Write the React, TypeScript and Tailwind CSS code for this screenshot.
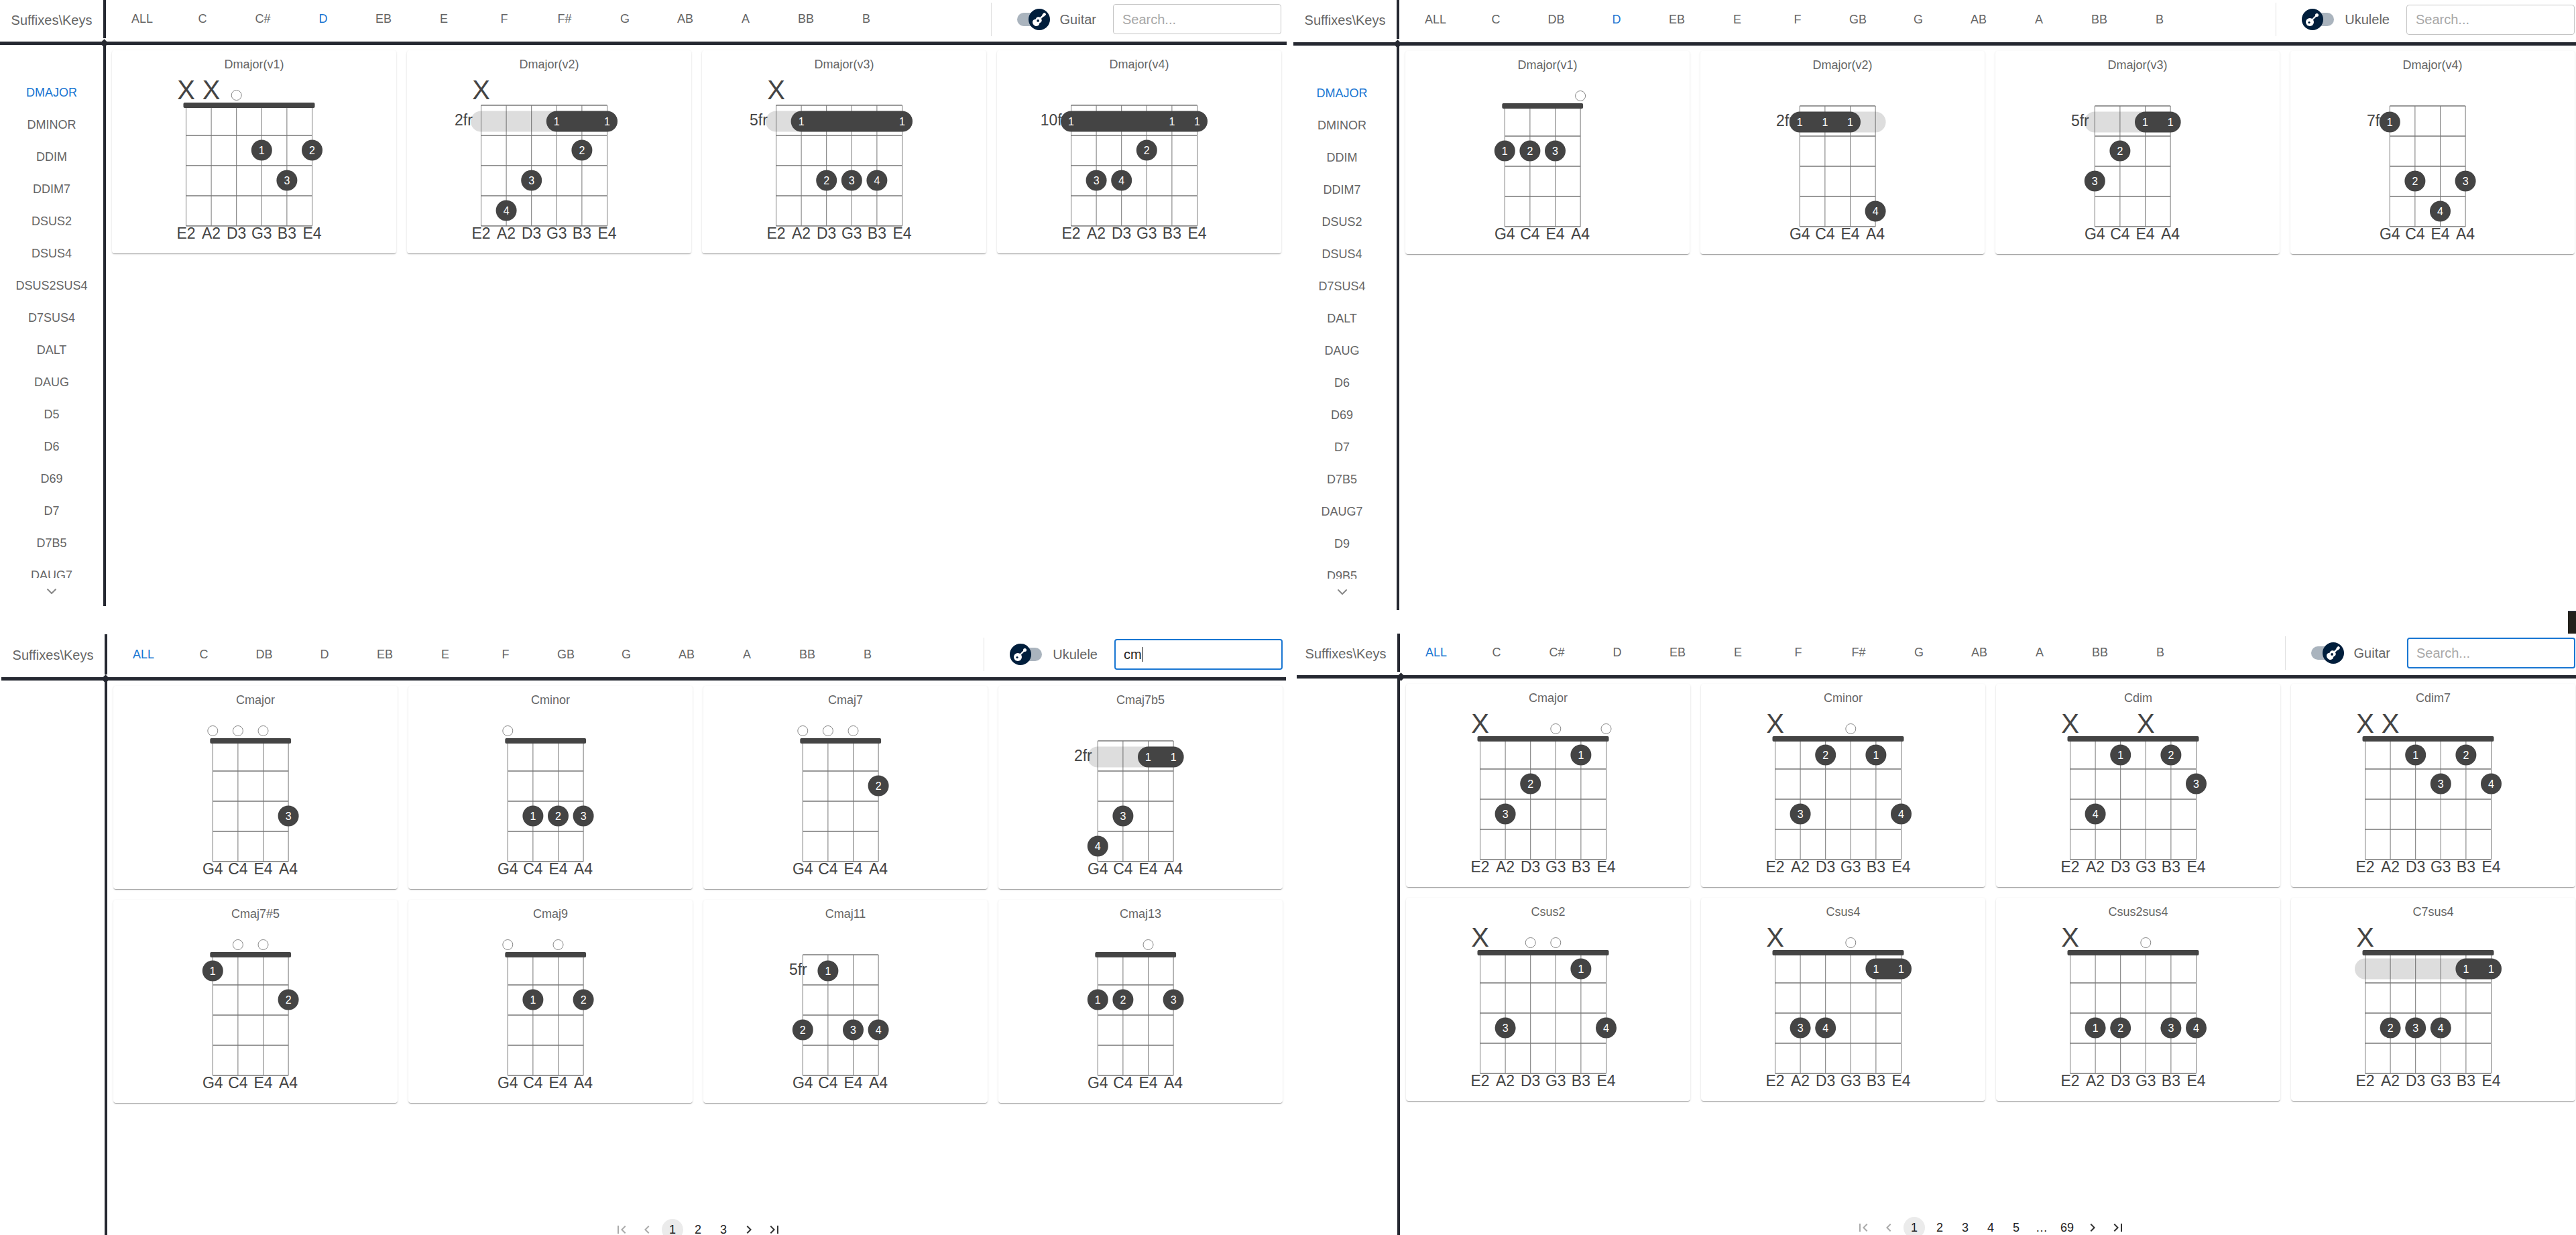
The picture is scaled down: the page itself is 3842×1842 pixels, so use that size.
import { ChevronDown } from "lucide-react";
import { FaGuitar } from "react-icons/fa";

type Dot = [number, number, number];

interface Barre {
    from: number;
    to: number;
    light?: number;
    labels: number[];
}

interface Chord {
    name: string;
    nut?: boolean;
    fr?: string;
    frShift?: number;
    muted?: number[];
    open?: number[];
    dots?: Dot[];
    barre?: Barre;
}

const GUITAR = ["E2", "A2", "D3", "G3", "B3", "E4"];
const UKULELE = ["G4", "C4", "E4", "A4"];
const SHARPS = ["ALL", "C", "C#", "D", "EB", "E", "F", "F#", "G", "AB", "A", "BB", "B"];
const FLATS = ["ALL", "C", "DB", "D", "EB", "E", "F", "GB", "G", "AB", "A", "BB", "B"];

const guitarD: Chord[] = [
    { name: "Dmajor(v1)", nut: true, muted: [0, 1], open: [2], dots: [[3, 2, 1], [5, 2, 2], [4, 3, 3]] },
    { name: "Dmajor(v2)", fr: "2fr", muted: [0], barre: { from: 3, to: 5, light: 0, labels: [3, 5] }, dots: [[4, 2, 2], [2, 3, 3], [1, 4, 4]] },
    { name: "Dmajor(v3)", fr: "5fr", muted: [0], barre: { from: 1, to: 5, light: 0, labels: [1, 5] }, dots: [[2, 3, 2], [3, 3, 3], [4, 3, 4]] },
    { name: "Dmajor(v4)", fr: "10fr", barre: { from: 0, to: 5, labels: [0, 4, 5] }, dots: [[3, 2, 2], [1, 3, 3], [2, 3, 4]] },
];

const ukuleleD: Chord[] = [
    { name: "Dmajor(v1)", nut: true, open: [3], dots: [[0, 2, 1], [1, 2, 2], [2, 2, 3]] },
    { name: "Dmajor(v2)", fr: "2fr", barre: { from: 0, to: 2, light: 3, labels: [0, 1, 2] }, dots: [[3, 4, 4]] },
    { name: "Dmajor(v3)", fr: "5fr", barre: { from: 2, to: 3, light: 0, labels: [2, 3] }, dots: [[1, 2, 2], [0, 3, 3]] },
    { name: "Dmajor(v4)", fr: "7fr", frShift: 1, dots: [[0, 1, 1], [1, 3, 2], [3, 3, 3], [2, 4, 4]] },
];

const ukuleleSearch: Chord[] = [
    { name: "Cmajor", nut: true, open: [0, 1, 2], dots: [[3, 3, 3]] },
    { name: "Cminor", nut: true, open: [0], dots: [[1, 3, 1], [2, 3, 2], [3, 3, 3]] },
    { name: "Cmaj7", nut: true, open: [0, 1, 2], dots: [[3, 2, 2]] },
    { name: "Cmaj7b5", fr: "2fr", barre: { from: 2, to: 3, light: 0, labels: [2, 3] }, dots: [[1, 3, 3], [0, 4, 4]] },
    { name: "Cmaj7#5", nut: true, open: [1, 2], dots: [[0, 1, 1], [3, 2, 2]] },
    { name: "Cmaj9", nut: true, open: [0, 2], dots: [[1, 2, 1], [3, 2, 2]] },
    { name: "Cmaj11", fr: "5fr", frShift: 15, dots: [[1, 1, 1], [0, 3, 2], [2, 3, 3], [3, 3, 4]] },
    { name: "Cmaj13", nut: true, open: [2], dots: [[0, 2, 1], [1, 2, 2], [3, 2, 3]] },
];

const guitarAll: Chord[] = [
    { name: "Cmajor", nut: true, muted: [0], open: [3, 5], dots: [[4, 1, 1], [2, 2, 2], [1, 3, 3]] },
    { name: "Cminor", nut: true, muted: [0], open: [3], dots: [[4, 1, 1], [2, 1, 2], [1, 3, 3], [5, 3, 4]] },
    { name: "Cdim", nut: true, muted: [0, 3], dots: [[2, 1, 1], [4, 1, 2], [5, 2, 3], [1, 3, 4]] },
    { name: "Cdim7", nut: true, muted: [0, 1], dots: [[2, 1, 1], [4, 1, 2], [3, 2, 3], [5, 2, 4]] },
    { name: "Csus2", nut: true, muted: [0], open: [2, 3], dots: [[4, 1, 1], [1, 3, 3], [5, 3, 4]] },
    { name: "Csus4", nut: true, muted: [0], open: [3], barre: { from: 4, to: 5, labels: [4, 5] }, dots: [[1, 3, 3], [2, 3, 4]] },
    { name: "Csus2sus4", nut: true, muted: [0], open: [3], dots: [[1, 3, 1], [2, 3, 2], [4, 3, 3], [5, 3, 4]] },
    { name: "C7sus4", nut: true, muted: [0], barre: { from: 4, to: 5, light: 0, labels: [4, 5] }, dots: [[1, 3, 2], [2, 3, 3], [3, 3, 4]] },
];

const suffixes1 = ["DMAJOR", "DMINOR", "DDIM", "DDIM7", "DSUS2", "DSUS4", "DSUS2SUS4", "D7SUS4", "DALT", "DAUG", "D5", "D6", "D69", "D7", "D7B5", "DAUG7"];
const suffixes2 = ["DMAJOR", "DMINOR", "DDIM", "DDIM7", "DSUS2", "DSUS4", "D7SUS4", "DALT", "DAUG", "D6", "D69", "D7", "D7B5", "DAUG7", "D9", "D9B5"];

const CELL = 37.6;
const TOP = 40;
const FRET = 45;
const dotY = (fret: number) => (fret === 1 ? 64 : 107 + FRET * (fret - 2));

const ChordDiagram = ({ chord, labels }: { chord: Chord; labels: string[] }) => {
    const left = labels.length === 6 ? 110.5 : 148.3;
    const sx = (s: number) => left + CELL * s;
    const right = sx(labels.length - 1);
    const barre = chord.barre;
    return (
        <svg width="424" height="261" viewBox="0 0 424 261" className="block overflow-visible">
            {labels.map((_, s) => (
                <line key={s} x1={sx(s)} x2={sx(s)} y1={TOP} y2={TOP + FRET * 4} stroke="#777" strokeWidth="1" />
            ))}
            {[0, 1, 2, 3, 4].map((f) => (
                <line key={f} x1={left} x2={right} y1={TOP + FRET * f} y2={TOP + FRET * f} stroke="#777" strokeWidth="1.5" />
            ))}
            {chord.nut && <rect x={left - 4} y={TOP - 4} width={right - left + 8} height={8} rx={2} fill="#444" />}
            {chord.fr && (
                <text
                    x={left - (labels.length === 6 ? 26 : 22) + (chord.frShift ?? 0)}
                    y={70}
                    textAnchor="middle"
                    fontSize="23"
                    fill="#444"
                >
                    {chord.fr}
                </text>
            )}
            {chord.muted?.map((s) => (
                <text key={s} x={sx(s)} y={31} textAnchor="middle" fontSize="40" fill="#444">
                    X
                </text>
            ))}
            {chord.open?.map((s) => (
                <circle key={s} cx={sx(s)} cy={25} r={7.5} fill="white" stroke="#888" strokeWidth="1" />
            ))}
            {barre && barre.light !== undefined && (
                <rect
                    x={Math.min(sx(barre.light), sx(barre.from)) - 15.5}
                    y={48.5}
                    width={Math.abs(sx(barre.light) - sx(barre.light === 0 ? barre.to : barre.from)) + 31}
                    height={31}
                    rx={15.5}
                    fill="#444"
                    fillOpacity="0.18"
                />
            )}
            {barre && (
                <rect x={sx(barre.from) - 15.5} y={48.5} width={sx(barre.to) - sx(barre.from) + 31} height={31} rx={15.5} fill="#444" />
            )}
            {barre?.labels.map((s) => (
                <text key={s} x={sx(s)} y={70} textAnchor="middle" fontSize="16" fill="white">
                    1
                </text>
            ))}
            {chord.dots?.map(([s, f, n]) => (
                <g key={`${s}-${f}`}>
                    <circle cx={sx(s)} cy={dotY(f)} r={15.5} fill="#444" />
                    <text x={sx(s)} y={dotY(f) + 6} textAnchor="middle" fontSize="16" fill="white">
                        {n}
                    </text>
                </g>
            ))}
            {labels.map((label, s) => (
                <text key={label} x={sx(s)} y={239} textAnchor="middle" fontSize="23" fill="#444">
                    {label}
                </text>
            ))}
        </svg>
    );
};

const ChordCard = ({ chord, labels }: { chord: Chord; labels: string[] }) => (
    <div className="h-[303px] rounded bg-white shadow-[0_2px_1px_-1px_rgba(0,0,0,0.2),0_1px_1px_0_rgba(0,0,0,0.14),0_1px_3px_0_rgba(0,0,0,0.12)]">
        <div className="flex h-[42px] items-center justify-center text-[18px] text-[#666]">{chord.name}</div>
        <ChordDiagram chord={chord} labels={labels} />
    </div>
);

const UkuleleIcon = () => (
    <svg width="22" height="22" viewBox="0 0 22 22" fill="white">
        <circle cx="7" cy="15" r="6" />
        <path d="M9 11.5 16.5 4l1.5 1.5L10.5 13z" />
        <circle cx="17.5" cy="4.5" r="2.5" />
        <circle cx="6" cy="15.5" r="1.6" fill="#001e3c" />
    </svg>
);

const Toggle = ({ ukulele }: { ukulele: boolean }) => (
    <div className="relative h-5 w-[49px]">
        <div className="h-5 w-12 rounded-full bg-[#aab4be]" />
        <div
            className={
                ukulele
                    ? "absolute left-0 top-[-6px] flex h-8 w-8 items-center justify-center rounded-full bg-[#001e3c]"
                    : "absolute left-[17px] top-[-6px] flex h-8 w-8 items-center justify-center rounded-full bg-[#001e3c]"
            }
        >
            {ukulele ? <UkuleleIcon /> : <FaGuitar size={20} color="white" />}
        </div>
    </div>
);

const SearchBox = ({ value, focused }: { value?: string; focused?: boolean }) => (
    <div
        className={
            focused
                ? "ml-[25px] flex h-[46px] w-[251px] items-center rounded border-2 border-[#1976d2] bg-white pl-[12px] text-[20px]"
                : "ml-[25px] flex h-[45px] w-[251px] items-center rounded border border-[#c4c4c4] bg-white pl-[13px] text-[20px]"
        }
    >
        {value ? (
            <>
                <span className="text-[#222]">{value}</span>
                <span className="ml-px h-[22px] w-px bg-black" />
            </>
        ) : (
            <span className="text-[#a8a8a8]">Search...</span>
        )}
    </div>
);

const PageIcon = ({ d, disabled }: { d: string; disabled?: boolean }) => (
    <div className="mx-[3px] flex h-8 w-8 items-center justify-center">
        <svg width="24" height="24" viewBox="0 0 24 24" fill={disabled ? "#aaaaaa" : "#333333"}>
            <path d={d} />
        </svg>
    </div>
);

const Pagination = ({ pages }: { pages: string[] }) => (
    <div className="flex items-center justify-center text-[18px] text-[#222]">
        <PageIcon disabled d="M18.41 16.59L13.82 12l4.59-4.59L17 6l-6 6 6 6zM6 6h2v12H6z" />
        <PageIcon disabled d="M15.41 7.41 14 6l-6 6 6 6 1.41-1.41L10.83 12z" />
        {pages.map((page, i) => (
            <div
                key={page}
                className={
                    i === 0
                        ? "mx-[3px] flex h-8 w-8 items-center justify-center rounded-full bg-[#ebebeb]"
                        : "mx-[3px] flex h-8 w-8 items-center justify-center"
                }
            >
                {page}
            </div>
        ))}
        <PageIcon d="M10 6 8.59 7.41 13.17 12l-4.58 4.59L10 18l6-6z" />
        <PageIcon d="M5.59 7.41L10.18 12l-4.59 4.59L7 18l6-6-6-6zM16 6h2v12h-2z" />
    </div>
);

interface PanelProps {
    outer: string;
    header: string;
    bar?: string;
    tabs: string[];
    activeTab: string;
    ukulele: boolean;
    value?: string;
    focused?: boolean;
    suffixes?: string[];
    suffixPad?: string;
    chords: Chord[];
    pages?: string[];
}

const Panel = ({ outer, header, bar, tabs, activeTab, ukulele, value, focused, suffixes, suffixPad, chords, pages }: PanelProps) => (
    <div className={outer}>
        <div className="flex h-full w-[1919px] flex-col">
            <div className={header}>
                <div className="flex h-full w-[158px] shrink-0 items-center justify-center border-r-4 border-[#252831] text-[20px] text-[#666]">
                    <span className="relative top-[1px]">Suffixes\Keys</span>
                </div>
                <div className="ml-[9px] flex">
                    {tabs.map((tab) => (
                        <div
                            key={tab}
                            className={tab === activeTab ? "w-[90px] text-center text-[18px] text-[#1976d2]" : "w-[90px] text-center text-[18px] text-[#666]"}
                        >
                            {tab}
                        </div>
                    ))}
                </div>
                <div className="ml-auto flex items-center pr-2">
                    <div className="mr-[38px] h-[50px] w-px bg-[#e0e0e0]" />
                    <Toggle ukulele={ukulele} />
                    <div className="ml-[15px] text-[20px] text-[#666]">{ukulele ? "Ukulele" : "Guitar"}</div>
                    <SearchBox value={value} focused={focused} />
                </div>
            </div>
            <div className={bar ?? "relative h-[5px] shrink-0 bg-[#252831]"}>
                <div className="absolute left-[151px] top-[-2px] h-[9px] w-[9px] rotate-45 bg-[#252831]" />
            </div>
            <div className="flex min-h-0 flex-1">
                <div className="flex w-[158px] shrink-0 flex-col border-r-4 border-[#252831]">
                    {suffixes && (
                        <>
                            <div className={suffixPad ?? "h-[795px] overflow-hidden pt-[47px]"}>
                                {suffixes.map((s, i) => (
                                    <div
                                        key={s}
                                        className={i === 0 ? "flex h-12 items-center justify-center text-[18px] text-[#1976d2]" : "flex h-12 items-center justify-center text-[18px] text-[#666]"}
                                    >
                                        {s}
                                    </div>
                                ))}
                            </div>
                            <div className={suffixPad ? "flex justify-center pr-[9px] pt-[8px]" : "flex justify-center pt-[8px]"}>
                                <ChevronDown size={24} color="#888" />
                            </div>
                        </>
                    )}
                </div>
                <div className="flex min-w-0 flex-1 flex-col pl-[9px] pr-2 pt-2">
                    <div className="grid grid-cols-4 gap-4">
                        {chords.map((chord) => (
                            <ChordCard key={chord.name} chord={chord} labels={ukulele ? UKULELE : GUITAR} />
                        ))}
                    </div>
                    {pages && (
                        <div className="mt-auto">
                            <Pagination pages={pages} />
                        </div>
                    )}
                </div>
            </div>
        </div>
    </div>
);

export default function App() {
    return (
        <div className="h-[1842px] w-[3842px] overflow-hidden bg-white font-['Liberation_Sans',Arial,sans-serif]">
            <div className="relative flex h-[945px] items-start">
                <Panel
                    outer="h-[904px] w-[1919px] shrink-0 overflow-hidden"
                    header="flex h-[62px] shrink-0 items-center pb-[5px]"
                    tabs={SHARPS}
                    activeTab="D"
                    ukulele={false}
                    suffixes={suffixes1}
                    chords={guitarD}
                />
                <Panel
                    outer="ml-[10px] h-[910px] w-[1919px] shrink-0 overflow-hidden"
                    header="flex h-[63px] shrink-0 items-center pb-[5px]"
                    tabs={FLATS}
                    activeTab="D"
                    ukulele
                    suffixes={suffixes2}
                    suffixPad="h-[795px] overflow-hidden pr-[9px] pt-[47px]"
                    chords={ukuleleD}
                />
                <div className="absolute bottom-0 right-0 h-[34px] w-[12px] border-t-2 border-[#2a2d36] bg-[#23211c]" />
            </div>
            <div className="flex items-start">
                <Panel
                    outer="ml-[2px] mt-[1px] h-[904px] w-[1916px] shrink-0 overflow-hidden"
                    header="flex h-[64px] shrink-0 items-center pb-[4px]"
                    tabs={FLATS}
                    activeTab="ALL"
                    ukulele
                    value="cm"
                    focused
                    chords={ukuleleSearch}
                    pages={["1", "2", "3"]}
                />
                <Panel
                    outer="ml-[12px] h-[902px] w-[1912px] shrink-0 overflow-hidden"
                    header="flex h-[62px] shrink-0 items-center pb-[5px]"
                    bar="relative ml-[4px] h-[5px] shrink-0 bg-[#252831]"
                    tabs={SHARPS}
                    activeTab="ALL"
                    ukulele={false}
                    focused
                    chords={guitarAll}
                    pages={["1", "2", "3", "4", "5", "…", "69"]}
                />
            </div>
        </div>
    );
}
